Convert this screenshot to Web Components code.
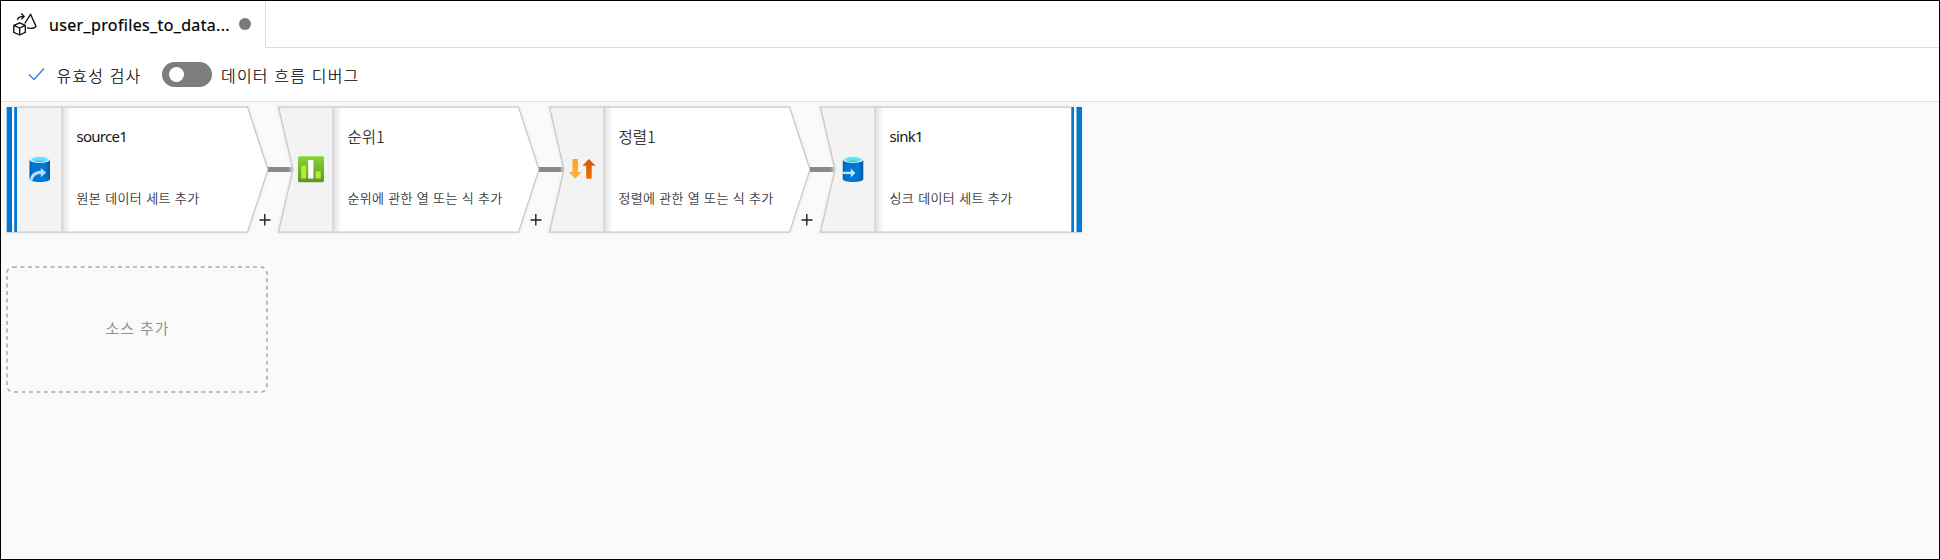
<!DOCTYPE html>
<html lang="ko"><head><meta charset="utf-8"><title>Data flow</title>
<style>html,body{margin:0;height:100%}body{font-family:"Noto Sans","Noto Sans CJK KR",sans-serif;color:#000}</style></head>
<body>
<flow-app></flow-app>
<script>
const define = (name, html, setup) => customElements.define(name, class extends HTMLElement {
  connectedCallback() {
    const root = this.attachShadow({mode: 'open'});
    root.innerHTML = typeof html === 'function' ? html(this) : html;
    if (setup) setup(this, root);
  }
});

/* one-line label, tracked so that it takes exactly the given width */
define('fit-text', '<style>:host{display:block;white-space:nowrap}span{display:inline-block}</style><span><slot></slot></span>', (el, root) => {
  const s = root.querySelector('span'), target = +el.getAttribute('w');
  const w = s.getBoundingClientRect().width;
  s.style.letterSpacing = (target - w) / Array.from(el.textContent).length + 'px';
  el.style.width = target + 'px';
});

const cylinder = arrow => `<defs><linearGradient id="b"><stop offset="0" stop-color="#005ba1"/><stop offset=".12" stop-color="#0074d0"/><stop offset=".75" stop-color="#0078d4"/><stop offset="1" stop-color="#005ba1"/></linearGradient></defs>
<path d="M3 4v19c0 1.700 4.500 3 10.300 3s10.200-1.300 10.200-3V4z" fill="url(#b)"/><ellipse cx="13.250" cy="3.700" rx="10.250" ry="3.400" fill="#e8e8e8"/><ellipse cx="13.250" cy="3.600" rx="8" ry="2.600" fill="#50e6ff"/><path d="M7.800 5.200c2.800-1 8-1 10.900 0-2.800 1-8.100 1-10.900 0z" fill="#2cc4e6"/>${arrow}`;
const icons = {
  source: cylinder('<path d="M3.300 24.200c.8-6 4.800-9.200 11-9.400V12l5.400 4.600-5.400 4.600v-3.100c-4.600 0-7.300 2.200-8.600 7.200z" fill="#b9dcf8"/>'),
  sink: cylinder('<path d="M3 15.800h8v-3.400l4.600 4.500-4.600 4.500v-3.400H3z" fill="#c4e2fa"/>'),
  rank: '<defs><linearGradient id="g" x2="0" y2="1"><stop stop-color="#86d633"/><stop offset="1" stop-color="#5e9624"/></linearGradient></defs><rect y=".2" width="26" height="26" rx="1.500" fill="url(#g)"/><path d="M3.200 9.800h5v12.700h-5zM17.500 15.200h5.200v7.300h-5.200z" fill="#b4ec36"/><path d="M10.200 4h5.200v18.500h-5.200z" fill="#fff"/>',
  sort: '<defs><linearGradient id="y" x2="0" y2="1"><stop stop-color="#faa21d"/><stop offset="1" stop-color="#ffb34d"/></linearGradient><linearGradient id="o" x2="0" y2="1"><stop stop-color="#d15900"/><stop offset="1" stop-color="#ef6f0c"/></linearGradient></defs><path d="M4.200 4q0-1 1-1h3.500q1 0 1 1v12h3.800L7 22.700.300 16h3.900z" fill="url(#y)"/><path d="M18 21.700q0 1 1 1h3.500q1 0 1-1v-12h3.800L20.700 3 14.200 9.700H18z" fill="url(#o)"/>'
};
const iconX = {source: 19.5, rank: 20, sort: 19.2, sink: 19.8};

define('flow-node', el => {
  const kind = el.getAttribute('kind'), first = kind === 'source', last = kind === 'sink';
  const right = last ? 'H261V125.500' : 'H240.500L261 63L240.500 125.500';
  const back = first ? 'H.5Z' : 'H.5L15 63Z';
  const outline = 'M.5.5' + right + back;
  const panel = first ? 'M.5.5H55V125.500H.5Z' : 'M.5.5H55V125.500H.5L15 63Z';
  return `<style>
:host{display:block;position:relative;width:261.500px;height:126px;flex:none}
.shape{position:absolute;inset:0;overflow:visible}
.body{position:relative;display:flex;flex-direction:column;padding:18px 0 0 69.500px;color:#151515}
.name{height:23px;font-size:15px;line-height:23px}
.name.ko{font-family:"Noto Sans CJK KR",sans-serif;font-weight:300;font-size:15.500px;-webkit-text-stroke:.2px #151515}
.desc{margin-top:39px;height:22px;font-size:13px;line-height:22px;font-family:"Noto Sans CJK KR",sans-serif;font-weight:300;-webkit-text-stroke:.15px #151515}
</style>
<svg class="shape" width="262" height="126">
<defs><linearGradient id="s"><stop stop-color="#d8d8d8"/><stop offset=".25" stop-color="#e9e9e9"/><stop offset="1" stop-color="#fff"/></linearGradient><filter id="blur" x="-10%" y="-10%" width="120%" height="120%"><feGaussianBlur stdDeviation="1.500"/></filter></defs>
<g transform="translate(0 -.4)">
<path d="${outline}" fill="none" stroke="#ededed" stroke-width="3" filter="url(#blur)"/>
<path d="${outline}" fill="#fff"/>
<path d="${panel}" fill="#f3f3f3"/>
<rect x="55" y="1" width="9" height="124" fill="url(#s)"/><path d="M55 1V125" stroke="#d2d2d2" stroke-width="1.300"/>
<path d="${outline}" fill="none" stroke="#c8c8c8" stroke-width="1.300"/>
${first?'<path d="M-.3 0H10.300V125.500H-.3Z" fill="#fff"/><path d="M-.3 .5H5V125.500H-.3ZM7.200 .5H10V125.500H7.200Z" fill="#0078d4"/>':''}
${last?'<path d="M250.500 0H262V125.500H250.500Z" fill="#fff"/><path d="M251.300 .5H254V125.500H251.300ZM256.500 .5H262V125.500H256.500Z" fill="#0078d4"/>':''}
${last?'':'<path d="M261 62.900H285.500" stroke="#8a8a8a" stroke-width="5"/><path d="M252.500 113.400H263.500M257.800 107.500V119" stroke="#222" stroke-width="1.400"/>'}
</g>
<svg x="${iconX[kind]}" y="49" width="28" height="27" viewBox="0 0 28 27">${icons[kind]}</svg>
</svg>
<div class="body"><fit-text class="name ${first||last?'':'ko'}" w="${el.getAttribute('name-w')}">${el.getAttribute('name')}</fit-text><fit-text class="desc" w="${el.getAttribute('desc-w')}">${el.getAttribute('desc')}</fit-text></div>`;
});

define('flow-tab', `<style>:host{display:flex;height:47px;box-sizing:border-box}
.tab{display:flex;width:265px;height:47px;box-sizing:border-box;padding-left:11px;border-right:1px solid #dcdcdc}
.tab svg{margin-top:11px;flex:none}.rest{flex:1;box-sizing:border-box;border-bottom:1px solid #dcdcdc}
fit-text{margin:11px 0 0 12px;font-size:16px;line-height:26px;-webkit-text-stroke:.2px #000}
.dot{width:12px;height:12px;border-radius:50%;background:#7a7a7a;margin:17px 0 0 9px}</style>
<div class="tab"><svg width="25" height="25" viewBox="0 0 25 25" fill="none" stroke="#111" stroke-width="1.350" stroke-linejoin="round"><path d="M1.800 13.300L7.700 10.800L13.300 13.300V20.400L7.700 23L1.800 20.400ZM1.800 13.300L7.700 16L13.300 13.300M7.700 16V23"/><path d="M5.500 8C5.800 5.400 7.600 4.400 12 4.400M9.300 1.600L12.200 4.400L9.300 7.200"/><path d="M12.700 11.500L18.600 2.300L24 14.400C22.700 16.400 18.500 17 14.900 15.600"/></svg>
<fit-text w="181">user_profiles_to_data...</fit-text><i class="dot"></i></div><div class="rest"></div>`);

define('flow-toolbar', `<style>:host{display:flex;align-items:center;height:54px;box-sizing:border-box;padding:0 0 0 27px;border-bottom:1px solid #dedede;font-family:"Noto Sans CJK KR",sans-serif;font-weight:300;font-size:16px;line-height:26px}
fit-text{-webkit-text-stroke:.15px #000}
.check{margin-right:11.500px;margin-top:-1px}.toggle{display:flex;align-items:center;box-sizing:border-box;width:50px;height:25px;border-radius:13px;background:#7d7d7d;padding-left:7px;margin:0 9.500px 0 20px}
.toggle i{width:15px;height:15px;border-radius:50%;background:#fff}</style>
<svg class="check" width="17" height="14" fill="none" stroke="#2f7de1" stroke-width="1.300"><path d="M1 7.500L6 12.500L16 1.500"/></svg>
<fit-text w="85">유효성 검사</fit-text><div class="toggle"><i></i></div><fit-text w="138.500">데이터 흐름 디버그</fit-text>`);

define('add-source', `<style>:host{display:flex;position:relative;align-items:center;justify-content:center;width:261px;height:127px;color:#929292;font-size:15px}
svg{position:absolute;inset:0}fit-text{margin-top:-5px}</style>
<svg width="262" height="127" overflow="visible"><rect x="0" y="1" width="260" height="125" rx="6" fill="none" stroke="#ababab" stroke-width="1.500" stroke-dasharray="4 3.500"/></svg><fit-text w="64">소스 추가</fit-text>`);

define('flow-app', `<style>:host{display:flex;flex-direction:column;box-sizing:border-box;width:1940px;height:560px;border:1px solid #000;background:#fff}
main{flex:1;background:#fafafa;padding:5px 0 0 6px}.row{display:flex;gap:9.500px;margin-bottom:33px}</style>
<flow-tab></flow-tab><flow-toolbar></flow-toolbar>
<main><div class="row">
<flow-node kind="source" name="source1" name-w="50.500" desc="원본 데이터 세트 추가" desc-w="123"></flow-node>
<flow-node kind="rank" name="순위1" name-w="37" desc="순위에 관한 열 또는 식 추가" desc-w="155"></flow-node>
<flow-node kind="sort" name="정렬1" name-w="37" desc="정렬에 관한 열 또는 식 추가" desc-w="155"></flow-node>
<flow-node kind="sink" name="sink1" name-w="33.500" desc="싱크 데이터 세트 추가" desc-w="123"></flow-node>
</div><add-source></add-source></main>`);
</script>
</body></html>
